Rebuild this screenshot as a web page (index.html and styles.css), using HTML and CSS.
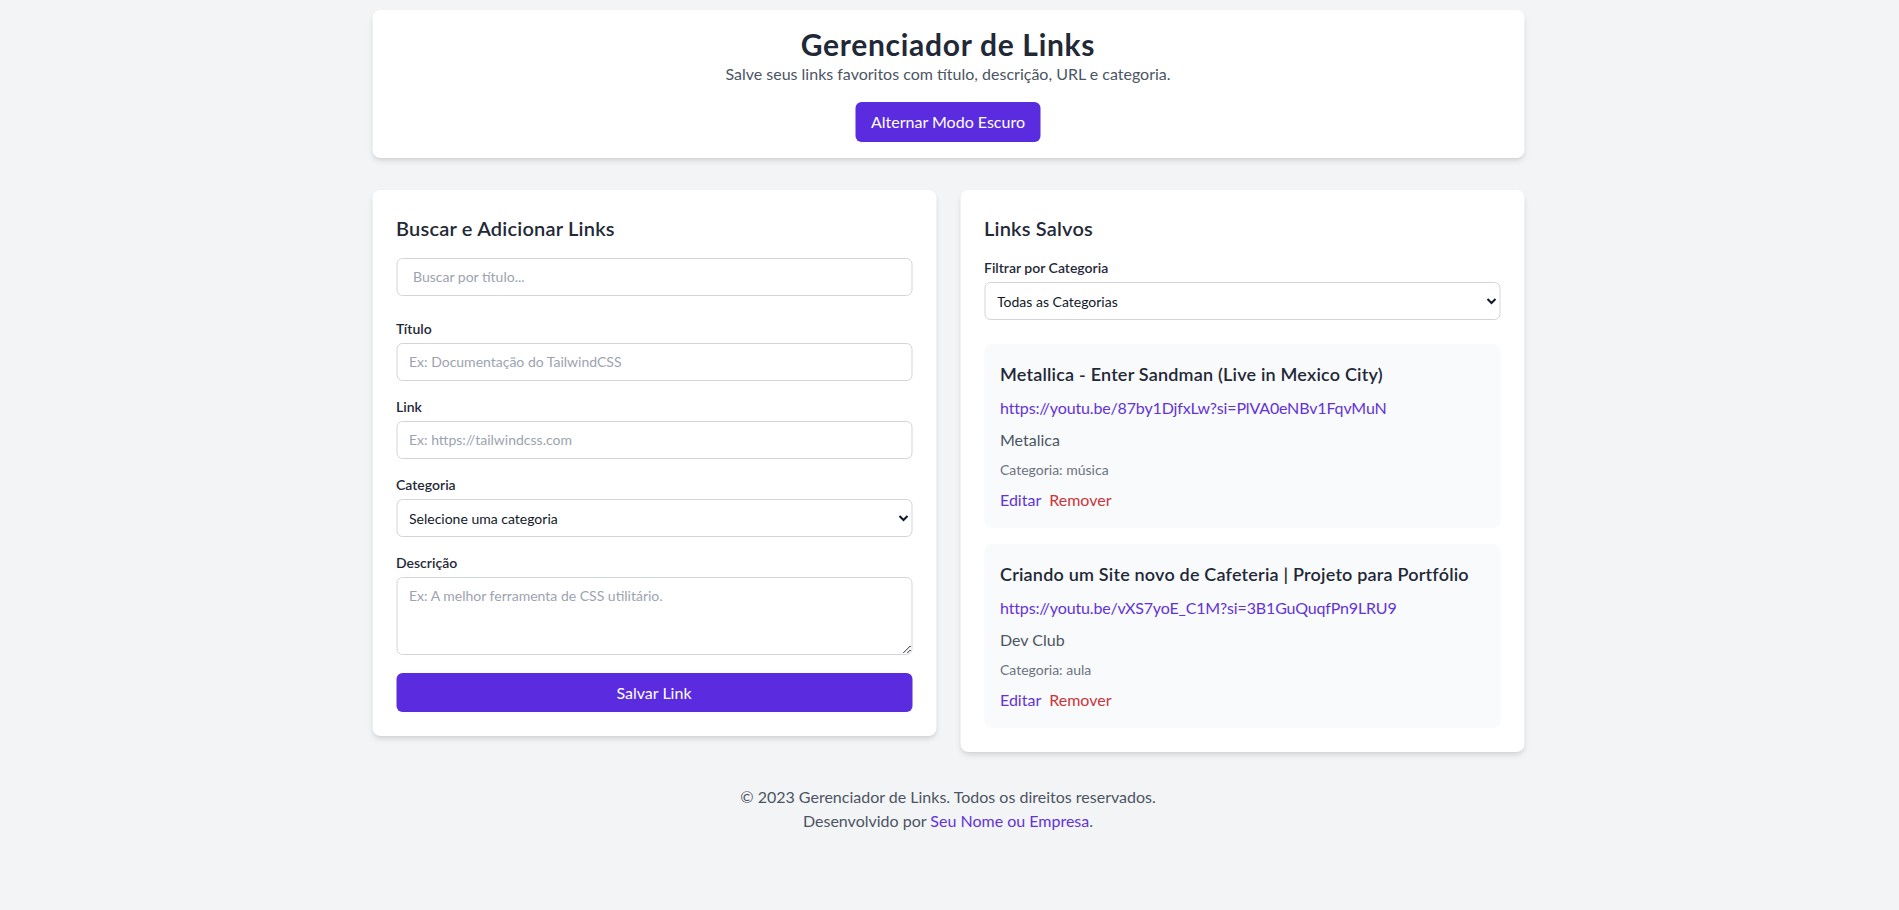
FILE: index.html
```html
<!DOCTYPE html>
<html lang="pt-BR">
<head>
<meta charset="utf-8">
<title>Gerenciador de Links</title>
<link rel="stylesheet" href="styles.css">
</head>
<body>
<div class="container">
  <header class="card header">
    <h1 class="title">Gerenciador de Links</h1>
    <p class="subtitle">Salve seus links favoritos com título, descrição, URL e categoria.</p>
    <button class="btn btn-toggle">Alternar Modo Escuro</button>
  </header>

  <main class="grid">
    <section class="card panel">
      <h2 class="panel-title">Buscar e Adicionar Links</h2>
      <input class="input search" type="text" placeholder="Buscar por título...">
      <form class="form">
        <div class="field">
          <label class="label">Título</label>
          <input class="input" type="text" placeholder="Ex: Documentação do TailwindCSS">
        </div>
        <div class="field">
          <label class="label">Link</label>
          <input class="input" type="text" placeholder="Ex: https://tailwindcss.com">
        </div>
        <div class="field">
          <label class="label">Categoria</label>
          <select class="input select">
            <option>Selecione uma categoria</option>
          </select>
        </div>
        <div class="field">
          <label class="label">Descrição</label>
          <textarea class="input textarea" rows="3" placeholder="Ex: A melhor ferramenta de CSS utilitário."></textarea>
        </div>
        <button type="button" class="btn btn-save">Salvar Link</button>
      </form>
    </section>

    <section class="card panel">
      <h2 class="panel-title">Links Salvos</h2>
      <label class="label">Filtrar por Categoria</label>
      <select class="input select filter">
        <option>Todas as Categorias</option>
      </select>
      <ul class="list">
        <li class="item">
          <h3 class="item-title">Metallica - Enter Sandman (Live in Mexico City)</h3>
          <a class="item-url" href="#">https://youtu.be/87by1DjfxLw?si=PlVA0eNBv1FqvMuN</a>
          <p class="item-desc">Metalica</p>
          <p class="item-cat">Categoria: música</p>
          <div class="item-actions"><a class="edit" href="#">Editar</a><a class="remove" href="#">Remover</a></div>
        </li>
        <li class="item">
          <h3 class="item-title">Criando um Site novo de Cafeteria | Projeto para Portfólio</h3>
          <a class="item-url" href="#">https://youtu.be/vXS7yoE_C1M?si=3B1GuQuqfPn9LRU9</a>
          <p class="item-desc">Dev Club</p>
          <p class="item-cat">Categoria: aula</p>
          <div class="item-actions"><a class="edit" href="#">Editar</a><a class="remove" href="#">Remover</a></div>
        </li>
      </ul>
    </section>
  </main>

  <footer class="footer">
    <p>© 2023 Gerenciador de Links. Todos os direitos reservados.</p>
    <p>Desenvolvido por <a href="#">Seu Nome ou Empresa</a>.</p>
  </footer>
</div>
</body>
</html>
```

FILE: styles.css
```css
* { box-sizing: border-box; }
body {
  margin: 0;
  background: #f3f4f6;
  font-family: "Lato", "Roboto", sans-serif;
  color: #1f2937;
  font-size: 16px;
  line-height: 24px;
}
.container {
  width: 1152px;
  margin: 0 auto;
  padding-top: 10px;
  transform: translateX(-1.5px);
}
.card {
  background: #fff;
  border-radius: 8px;
  box-shadow: 0 4px 6px -1px rgba(0,0,0,0.1), 0 2px 4px -2px rgba(0,0,0,0.1);
}
.header {
  padding: 16px;
  text-align: center;
  margin-bottom: 32px;
}
.title {
  margin: 0;
  font-size: 30px;
  line-height: 36px;
  font-weight: 700;
  letter-spacing: 0.7px;
  color: #1f2937;
}
.subtitle {
  margin: 0;
  color: #4b5563;
}
.btn {
  font-family: inherit;
  font-size: 16px;
  line-height: 24px;
  border: 0;
  color: #fff;
  background: #5b2be0;
  border-radius: 6px;
  cursor: pointer;
}
.btn-toggle {
  margin-top: 16px;
  padding: 8px 16px;
}
.grid {
  display: grid;
  grid-template-columns: 1fr 1fr;
  gap: 24px;
  align-items: start;
}
.panel {
  padding: 24px;
}
.panel-title {
  margin: 0 0 16px;
  font-size: 20px;
  line-height: 28px;
  font-weight: 600;
  letter-spacing: 0.2px;
  color: #1f2937;
}
.input {
  display: block;
  width: 100%;
  font-family: inherit;
  font-size: 14px;
  line-height: 20px;
  padding: 8px 12px;
  border: 1px solid #d1d5db;
  border-radius: 6px;
  color: #111827;
  background: #fff;
  outline: none;
}
.input::placeholder { color: #9ca3af; }
.search {
  padding: 8px 16px;
  margin-bottom: 23px;
}
.form { display: flex; flex-direction: column; gap: 16px; }
.field { display: flex; flex-direction: column; gap: 4px; }
.label {
  display: block;
  font-size: 14px;
  line-height: 20px;
  font-weight: 600;
  color: #1f2937;
}
.select { height: 38px; padding: 0 8px; }
.textarea { resize: vertical; height: 78px; }
.btn-save {
  width: 100%;
  padding: 8px 0;
  margin-top: 2px;
  height: 39px;
}
.filter { margin-top: 4px; margin-bottom: 24px; }
.list { list-style: none; margin: 0; padding: 0; display: flex; flex-direction: column; gap: 16px; }
.item {
  background: #f9fafb;
  border-radius: 8px;
  padding: 16px;
}
.item-title {
  margin: 0 0 8px;
  font-size: 18px;
  line-height: 28px;
  font-weight: 600;
  letter-spacing: 0.2px;
  color: #1f2937;
}
.item-url {
  display: block;
  color: #6233d8;
  letter-spacing: -0.15px;
  text-decoration: none;
}
.item-desc { margin: 8px 0 0; color: #4b5563; }
.item-cat { margin: 8px 0 0; font-size: 14px; line-height: 20px; color: #6b7280; }
.item-actions { margin-top: 8px; display: flex; gap: 8px; }
.edit { color: #6233d8; text-decoration: none; }
.remove { color: #c9353a; text-decoration: none; }
.footer {
  margin-top: 33px;
  text-align: center;
  color: #4b5563;
}
.footer p { margin: 0; }
.footer a { color: #6233d8; text-decoration: none; }
```
